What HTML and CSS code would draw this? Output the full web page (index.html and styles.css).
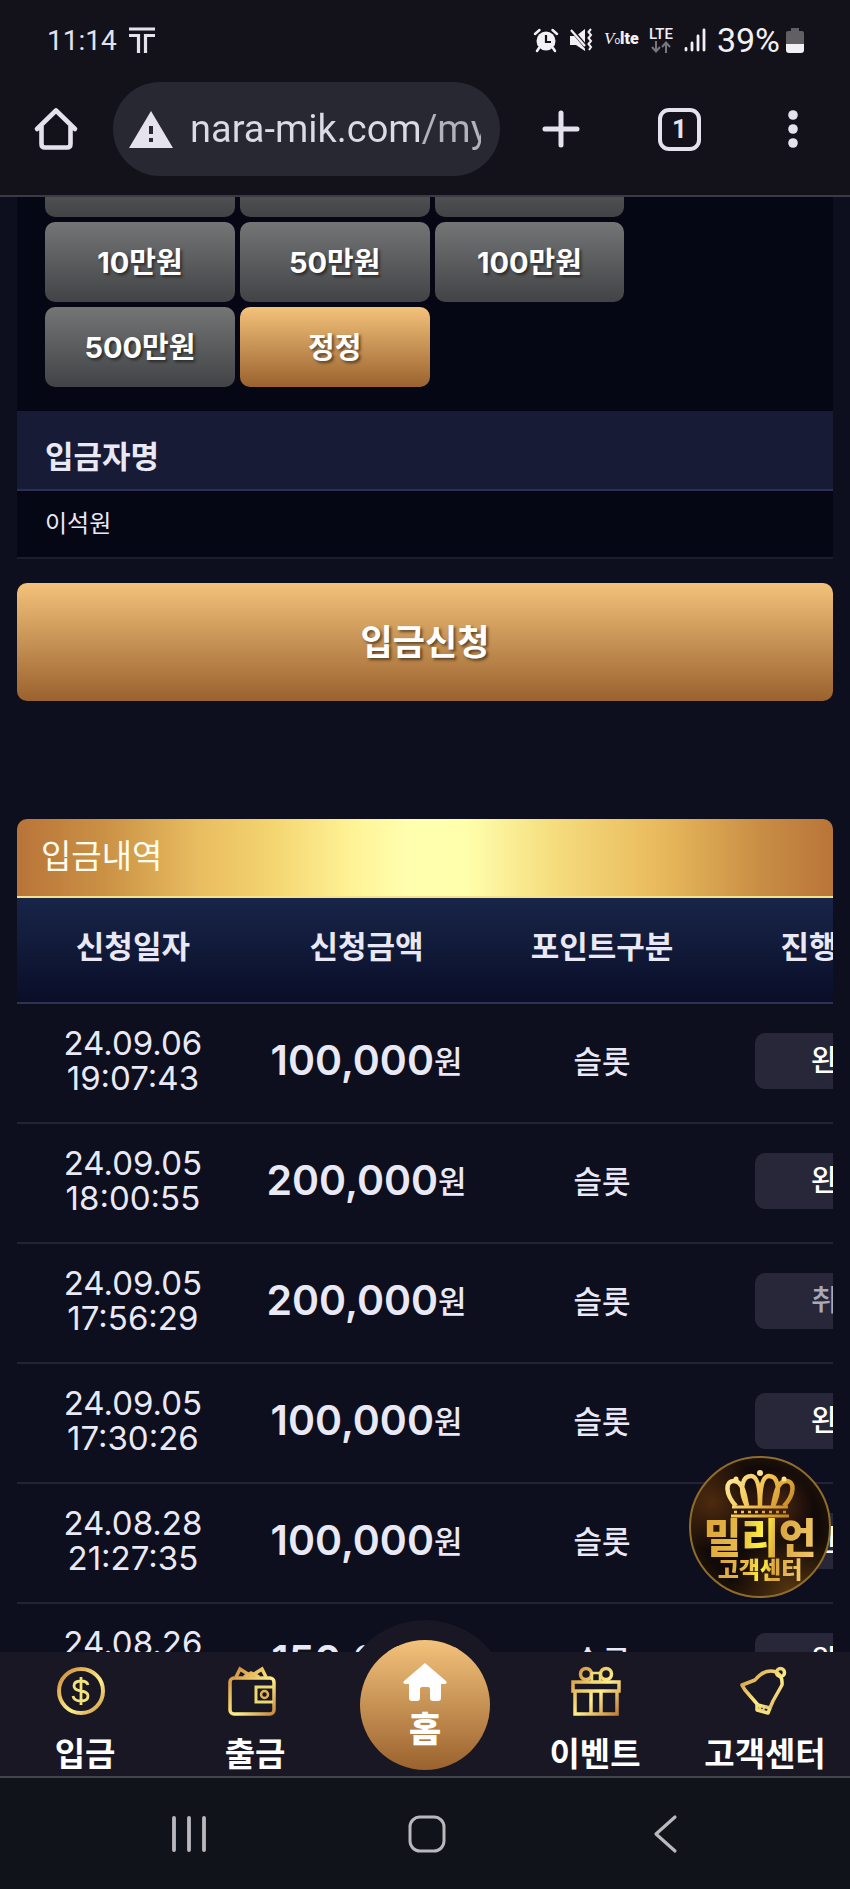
FILE: index.html
```html
<!DOCTYPE html>
<html lang="ko">
<head>
<meta charset="utf-8">
<meta name="viewport" content="width=device-width, initial-scale=1">
<title>입금신청</title>
<link rel="stylesheet" href="styles.css">
</head>
<body>
<header class="chrome">
  <div class="status">
    <div class="status-side">
      <time class="clock">11:14</time>
      <svg width="26" height="28" viewBox="0 0 26 28" fill="none" stroke="currentColor" stroke-width="3.200"><path d="M0 3H26M0 9.500H9.500V27M26 9.500H16.500V27"/></svg>
    </div>
    <div class="status-side status-right">
      <svg width="24" height="24" viewBox="0 0 24 24"><circle cx="12" cy="13" r="9.500" fill="currentColor"/><path d="M1 6L5.500 2M23 6L18.500 2M5 20L3 23M19 20L21 23" stroke="currentColor" stroke-width="2.500" stroke-linecap="round"/><path d="M12 7V14H17" fill="none" stroke="#13121b" stroke-width="2.200"/></svg>
      <svg width="24" height="24" viewBox="0 0 24 24"><path d="M1 8H7L16 1V23L7 17H1Z" fill="currentColor"/><path d="M2 1L18 20" stroke="#13121b" stroke-width="4"/><path d="M2 2L16 18" stroke="currentColor" stroke-width="2.200"/><path d="M22 1L19.500 4L22 7L19.500 10L22 13L19.500 16L22 19L20 22" fill="none" stroke="currentColor" stroke-width="2"/></svg>
      <span class="volte"><i>V</i><small>o</small><b>lte</b></span>
      <span class="lte"><span>LTE</span>
        <svg width="20" height="12" viewBox="0 0 20 12" fill="none" stroke="#77767d" stroke-width="2"><path d="M5 0V10M1 6L5 10.500L9 6M15 12V2M11 6L15 1.500L19 6"/></svg>
      </span>
      <svg width="22" height="24" viewBox="0 0 22 24" stroke="currentColor" stroke-width="2.800" stroke-linecap="round"><path d="M2 20.500V22M8 15V22M14 8V22M20 2V22"/></svg>
      <span class="battery">39%
        <svg width="18" height="25" viewBox="0 0 18 25"><path d="M5 0H13V3H16Q18 3 18 5V16H0V5Q0 3 2 3H5Z" fill="#615f64"/><path d="M0 16H18V22Q18 25 15 25H3Q0 25 0 22Z" fill="#f2f0f5"/></svg>
      </span>
    </div>
  </div>
  <div class="toolbar">
    <button class="tool" aria-label="홈페이지"><svg width="44" height="44" viewBox="0 0 44 44" fill="none" stroke="currentColor" stroke-width="4.600" stroke-linejoin="round" stroke-linecap="round"><path d="M3 22L22 3.500L41 22M7.500 19V37Q7.500 40.500 11 40.500H33Q36.500 40.500 36.500 37V19"/></svg></button>
    <label class="address">
      <svg width="44" height="37" viewBox="0 0 44 37"><path d="M22 0L44 37H0Z" fill="currentColor"/><path d="M22 15V23M22 27V31" stroke="#282832" stroke-width="4"/></svg>
      <input type="text" value="nara-mik.com/my" aria-label="주소">
    </label>
    <button class="tool" aria-label="새 탭"><svg width="38" height="38" viewBox="0 0 38 38" stroke="currentColor" stroke-width="5" stroke-linecap="round"><path d="M3 19H35M19 3V35"/></svg></button>
    <button class="tool tabs" aria-label="탭 1개">1</button>
    <button class="tool" aria-label="메뉴"><svg width="10" height="38" viewBox="0 0 10 38" fill="currentColor"><circle cx="5" cy="5" r="4.800"/><circle cx="5" cy="19" r="4.800"/><circle cx="5" cy="33" r="4.800"/></svg></button>
  </div>
</header>

<div class="app">
  <main class="view">
    <div class="scrolled">
      <section class="deposit">
        <div class="amounts">
          <button class="amount" aria-label="1만원"></button>
          <button class="amount" aria-label="3만원"></button>
          <button class="amount" aria-label="5만원"></button>
          <button class="amount">10만원</button>
          <button class="amount">50만원</button>
          <button class="amount">100만원</button>
          <button class="amount">500만원</button>
          <button class="amount gold">정정</button>
        </div>
        <h2 class="field-name">입금자명</h2>
        <p class="field-value">이석원</p>
      </section>
      <button class="submit gold">입금신청</button>

      <section class="history">
        <h2 class="history-title">입금내역</h2>
        <table class="records">
          <thead><tr><th>신청일자</th><th>신청금액</th><th>포인트구분</th><th>진행상태</th></tr></thead>
          <tbody>
            <tr><td>24.09.06<br>19:07:43</td><td><b>100,000</b>원</td><td>슬롯</td><td><span class="state">완료</span></td></tr>
            <tr><td>24.09.05<br>18:00:55</td><td><b>200,000</b>원</td><td>슬롯</td><td><span class="state">완료</span></td></tr>
            <tr><td>24.09.05<br>17:56:29</td><td><b>200,000</b>원</td><td>슬롯</td><td><span class="state canceled">취소</span></td></tr>
            <tr><td>24.09.05<br>17:30:26</td><td><b>100,000</b>원</td><td>슬롯</td><td><span class="state">완료</span></td></tr>
            <tr><td>24.08.28<br>21:27:35</td><td><b>100,000</b>원</td><td>슬롯</td><td><span class="state">완료</span></td></tr>
            <tr><td>24.08.26<br>20:14:08</td><td><b>150,000</b>원</td><td>슬롯</td><td><span class="state">완료</span></td></tr>
          </tbody>
        </table>
      </section>
    </div>
  </main>

  <a class="support" href="#support">
    <svg width="70" height="48" viewBox="0 0 70 48" fill="none" stroke="url(#crown)" stroke-width="4.500">
      <defs><linearGradient id="crown" x1="0" y1="0" x2="70" y2="48" gradientUnits="userSpaceOnUse"><stop offset="0" stop-color="#fff0a8"/><stop offset=".5" stop-color="#f2c14e"/><stop offset="1" stop-color="#b87818"/></linearGradient></defs>
      <path d="M11 36C0 24 0 11 9 11C18 11 20 26 22 36M22 36C13 18 18 6 26 6C33 6 35 20 35 36M35 36C35 20 37 6 44 6C52 6 57 18 48 36M59 36C70 24 70 11 61 11C52 11 50 26 48 36"/>
      <path d="M7 37H63M6 46H64" stroke-width="3"/>
      <path d="M9 42H62" stroke-width="2.500" stroke-dasharray="3 4"/>
      <g fill="#ffe48a" stroke="none"><circle cx="35" cy="3" r="3"/><circle cx="11" cy="9" r="2.500"/><circle cx="59" cy="9" r="2.500"/></g>
    </svg>
    <strong>밀리언</strong>
    <span>고객센터</span>
  </a>

  <nav class="menu">
    <a href="#deposit">
      <svg width="52" height="52" viewBox="0 0 52 52" fill="none" stroke="url(#gold)">
        <defs><linearGradient id="gold" x1="0" y1="0" x2="52" y2="52" gradientUnits="userSpaceOnUse"><stop offset="0" stop-color="#c47c32"/><stop offset=".32" stop-color="#e9c05f"/><stop offset=".55" stop-color="#ffef8c"/><stop offset="1" stop-color="#b96e2b"/></linearGradient></defs>
        <circle cx="22" cy="26" r="22" stroke-width="4"/><path d="M29 20Q28 16 22 16Q15 16 15 21Q15 25 22 26Q29 27 29 31Q29 36 22 36Q15 36 14 31M22 12V40" stroke="#f3e27c" stroke-width="2.800"/></svg>
      입금</a>
    <a href="#withdraw">
      <svg width="52" height="52" viewBox="0 0 52 52" fill="none" stroke="url(#gold)" stroke-width="3.500"><rect x="1" y="13" width="44" height="36" rx="4"/><path d="M7 12L11 4L22 11L33 4L37 12M15 12L22 8L30 12"/><path d="M44 22H27V37H44" stroke="#ecd870" stroke-width="3"/><circle cx="35.500" cy="29.500" r="3.500" stroke="#dfb457" stroke-width="2.500"/></svg>
      출금</a>
    <a class="home gold" href="#home">
      <svg width="44" height="40" viewBox="0 0 44 40" fill="currentColor"><path d="M22 1L43 19Q45 22 41 22H38V36Q38 39 35 39H30Q27 39 27 36V27Q27 25 25 25H19Q17 25 17 27V36Q17 39 14 39H9Q6 39 6 36V22H3Q-1 22 1 19Z"/></svg>
      홈</a>
    <a href="#event">
      <svg width="52" height="52" viewBox="0 0 52 52" fill="none" stroke="url(#gold)" stroke-width="3.500"><rect x="4" y="17" width="46" height="9"/><path d="M6 27V49H48V27M22 27V49M32 27V49" /><circle cx="17" cy="9" r="5.500"/><circle cx="37" cy="9" r="5.500"/><rect x="23" y="8" width="8" height="9" stroke="#f0dc74" stroke-width="2.500"/></svg>
      이벤트</a>
    <a href="#help">
      <svg width="52" height="52" viewBox="0 0 52 52" fill="none" stroke="url(#gold)" stroke-width="3.500" stroke-linejoin="round"><path d="M3 20L6 25L19 40L31 43L34 36L43 20Q44 11 37 7Q26 3 16 15Z"/><circle cx="41.500" cy="7.500" r="4"/><path d="M18 39L18 45L29 48L31 43" stroke="#f3e27c"/><circle cx="23" cy="43" r="2" stroke-width="2"/></svg>
      고객센터</a>
  </nav>
</div>

<footer class="system">
  <button aria-label="최근 앱"><svg width="38" height="38" viewBox="0 0 38 38" stroke="currentColor" stroke-width="3.800" stroke-linecap="round"><path d="M4 3V35M19 3V35M34 3V35"/></svg></button>
  <button aria-label="홈 화면"><svg width="38" height="38" viewBox="0 0 38 38" fill="none" stroke="currentColor" stroke-width="3"><rect x="2" y="2" width="34" height="34" rx="10"/></svg></button>
  <button aria-label="뒤로"><svg width="38" height="38" viewBox="0 0 38 38" fill="none" stroke="currentColor" stroke-width="3.200" stroke-linecap="round" stroke-linejoin="round"><path d="M28 2L9 19L28 36"/></svg></button>
</footer>
</body>
</html>
```

FILE: styles.css
```css
* { box-sizing: border-box; }

body {
  margin: 0;
  height: 100vh;
  display: flex;
  flex-direction: column;
  overflow: hidden;
  background: #0d0e1e;
  color: #e9e9f5;
  font-family: Inter, "Noto Sans CJK KR", sans-serif;
}

button { border: 0; padding: 0; background: none; color: inherit; font: inherit; }
a { color: inherit; text-decoration: none; }
h2, p { margin: 0; }
svg { display: block; flex: none; overflow: visible; }

.gold { background: linear-gradient(#f3c27b, #9a622e); }

/* Status bar and browser toolbar */
.chrome {
  flex: none;
  background: #13121b;
  color: #e5e2ee;
  border-bottom: 2px solid #3c3b45;
  font-family: Roboto, "Noto Sans CJK KR", sans-serif;
}
.status {
  display: flex;
  justify-content: space-between;
  height: 82px;
  padding: 0 46px 2px 47px;
}
.status-side { display: flex; align-items: center; gap: 12px; }
.status-right { gap: 11px; color: #f2f0f5; }
.clock { font-size: 28px; }
.volte { display: flex; align-items: baseline; width: 34px; font-size: 17px; line-height: 24px; }
.volte i { font-family: "Liberation Serif", serif; }
.volte small { font-size: 10px; }
.volte b { font-size: 16px; font-weight: 900; }
.lte { display: grid; justify-items: center; font-size: 15px; line-height: 14px; font-weight: 500; }
.battery { display: flex; align-items: center; gap: 6px; font-size: 34px; }

.toolbar {
  display: flex;
  align-items: center;
  height: 113px;
  padding: 0 52px 19px 34px;
}
.tool { flex: none; display: grid; place-items: center; }
.address {
  flex: 1;
  min-width: 0;
  display: flex;
  align-items: center;
  gap: 17px;
  height: 94px;
  margin: 0 42px 0 35px;
  padding: 0 19px 0 16px;
  border-radius: 47px;
  background: #282832;
}
.address input {
  flex: 1;
  min-width: 0;
  height: 60px;
  border: 0;
  padding: 0;
  background: linear-gradient(90deg, #dddae8 80%, #b3b1be 80%);
  background-clip: text;
  -webkit-background-clip: text;
  color: transparent;
  font: 38px Roboto, sans-serif;
}
.tabs {
  width: 43px;
  height: 43px;
  margin: 0 87px 0 78px;
  border: 4px solid #e5e2ee;
  border-radius: 11px;
  font-size: 26px;
  font-weight: 700;
}

/* Page */
.app { position: relative; flex: 1; min-height: 0; display: flex; flex-direction: column; }
.view { flex: 1; min-height: 0; overflow: hidden; }
.scrolled { margin-top: -60px; padding: 0 17px; }

.deposit { background: #050715; border-bottom: 2px solid #1d1e2d; }
.amounts {
  display: grid;
  grid-template-columns: repeat(3, 1fr);
  gap: 5px;
  width: 71%;
  margin-left: 28px;
  padding-bottom: 24px;
}
.amount {
  height: 80px;
  padding-bottom: 4px;
  border-radius: 10px;
  background: linear-gradient(#747575, #424346);
  color: #fff;
  font-size: 29px;
  font-weight: 700;
  text-shadow: 2px 2px 3px #0008;
}
.amount.gold { background: linear-gradient(#f3c27b, #9a622e); }
.field-name {
  height: 80px;
  padding: 14px 28px 0;
  background: #171b36;
  border-bottom: 2px solid #2b3152;
  font-size: 31px;
  line-height: 64px;
}
.field-value { padding: 0 28px; font-size: 24px; line-height: 66px; }
.submit {
  display: block;
  width: 100%;
  height: 118px;
  margin: 24px 0 118px;
  padding-bottom: 6px;
  border-radius: 10px;
  color: #fff;
  font-size: 35px;
  font-weight: 700;
  text-shadow: 2px 2px 3px #0008;
}

.history { overflow: hidden; border-radius: 10px 10px 0 0; }
.history-title {
  height: 79px;
  padding: 0 24px;
  border-bottom: 2px solid #f6e28c;
  background: linear-gradient(90deg, #b97439, #cb9245 11%, #e8bc60 22%, #f3d46f 31%, #fff296 41%, #ffffaf 48%, #ffffac 55%, #f5dc7d 66%, #e8b95c 79%, #c98e45 91%, #b97439);
  color: #fffdf0;
  font-size: 33px;
  font-weight: 400;
  line-height: 74px;
}
.records { width: 115%; table-layout: fixed; border-collapse: collapse; text-align: center; }
.records th {
  height: 105px;
  padding: 0 0 6px;
  background: linear-gradient(#182548, #0a0e28);
  border-bottom: 2px solid #2e3150;
  font-size: 31px;
  line-height: 36px;
}
.records th:first-child { width: 24.7%; }
.records td {
  height: 120px;
  padding: 0 0 4px;
  border-bottom: 2px solid #232334;
  font-size: 31px;
  font-weight: 500;
  line-height: 35px;
}
.records td:first-child { font-size: 33px; font-weight: 400; }
.records td b { font-size: 41px; font-weight: 600; vertical-align: -2px; }
.state {
  display: block;
  width: 70%;
  margin: 0 auto;
  border-radius: 10px;
  background: #272739;
  color: #fff;
  font-size: 29px;
  line-height: 56px;
}
.canceled { color: #aaa9b8; }

/* Floating support badge */
.support {
  position: absolute;
  right: 19px;
  bottom: 178px;
  width: 142px;
  height: 142px;
  padding-top: 12px;
  display: flex;
  flex-direction: column;
  align-items: center;
  border: 2px solid #8f6c2c;
  border-radius: 50%;
  background:
    radial-gradient(circle at 15% 32%, #6b3b12aa, transparent 32%),
    radial-gradient(circle at 62% 35%, #6b3518aa, transparent 30%),
    radial-gradient(circle at 70% 95%, #7a4c1499, transparent 35%),
    radial-gradient(#120a08 60%, #352309);
}
.support strong, .support span {
  background: linear-gradient(100deg, #dda23a, #e6bc49 35%, #fff23c 52%, #d9a43e 65%, #f3ca6b);
  background-clip: text;
  -webkit-background-clip: text;
  color: transparent;
  font-weight: 900;
}
.support strong { font-size: 41px; line-height: 40px; }
.support span { font-size: 23px; line-height: 24px; }

/* Bottom menu */
.menu {
  flex: none;
  display: grid;
  grid-template-columns: repeat(5, 1fr);
  justify-items: center;
  height: 124px;
  background: #181723;
}
.menu a {
  display: flex;
  flex-direction: column;
  align-items: center;
  gap: 14px;
  padding-top: 13px;
  color: #fff;
  font-size: 33px;
  font-weight: 700;
  line-height: 46px;
  white-space: nowrap;
}
.menu .home {
  gap: 4px;
  width: 130px;
  height: 130px;
  margin-top: -12px;
  padding-top: 22px;
  border-radius: 50%;
  box-shadow: 0 0 0 20px #181723;
  font-size: 35px;
  font-weight: 900;
}

/* System navigation, stacked above the halo of the home button */
.system {
  position: relative;
  z-index: 1;
  flex: none;
  display: grid;
  grid-template-columns: repeat(3, 1fr);
  place-items: center;
  height: 113px;
  padding: 0 65px 0 70px;
  border-top: 2px solid #44444d;
  background: #11131a;
  color: #b9b9bd;
}
```
